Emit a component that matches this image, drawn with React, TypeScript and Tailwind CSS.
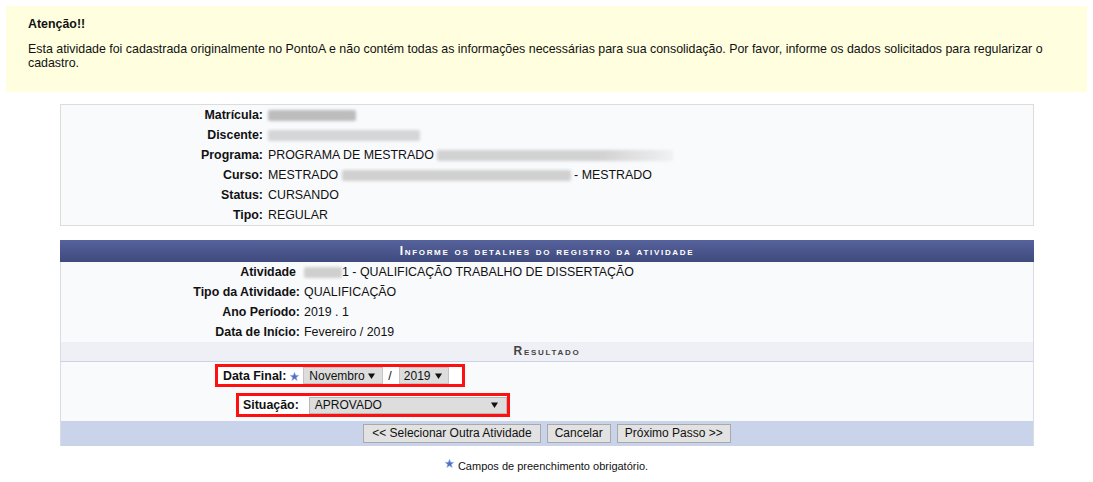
import React from "react";

const Star = ({ size = 9 }: { size?: number }) => (
  <svg width={size} height={size} viewBox="0 0 10 10" className="shrink-0">
    <polygon
      points="5,0.3 6.3,3.6 9.8,3.8 7.1,6.0 8.0,9.5 5,7.5 2.0,9.5 2.9,6.0 0.2,3.8 3.7,3.6"
      fill="#4f70c8"
      stroke="#9fb4e6"
      strokeWidth="0.6"
    />
  </svg>
);

const Arrow = () => (
  <svg width="7" height="6" viewBox="0 0 7 6" className="shrink-0">
    <polygon points="0,0.5 7,0.5 3.5,6" fill="#111" />
  </svg>
);

const Blur = ({ w, tone = "#cbcbcb", fade = false }: { w: number; tone?: string; fade?: boolean }) => (
  <span
    className="inline-block h-[11px] align-middle blur-[1.5px] rounded-[2px]"
    style={{
      width: w,
      background: fade ? `linear-gradient(to right, ${tone}, ${tone} 70%, rgba(220,220,220,0.3))` : tone,
    }}
  />
);

const InfoRow = ({ label, children }: { label: string; children: React.ReactNode }) => (
  <div className="grid grid-cols-[205px_1fr] h-[20px] leading-[20px]">
    <div className="text-right font-bold pr-[3px]">{label}</div>
    <div className="pl-[2px] whitespace-nowrap">{children}</div>
  </div>
);

const FormRow = ({ label, children, extra = "" }: { label: string; children: React.ReactNode; extra?: string }) => (
  <div className="grid grid-cols-[241px_1fr] h-[20px] leading-[20px]">
    <div className={"text-right font-bold pr-[2px] " + extra}>{label}</div>
    <div className="pl-[2px] whitespace-nowrap">{children}</div>
  </div>
);

export default function App() {
  return (
    <div className="w-[1093px] h-[482px] bg-white text-[12.4px] leading-[14px] text-[#111] font-['Liberation_Sans',Arial,sans-serif] overflow-hidden">
      <div className="mx-[6px] mt-[6px] bg-[#ffffe0] pl-[22px] pr-[30px] pt-[11px] pb-[22px]">
        <div className="font-bold">Atenção!!</div>
        <p className="mt-[11px]">
          Esta atividade foi cadastrada originalmente no PontoA e não contém todas as informações necessárias para sua
          consolidação. Por favor, informe os dados solicitados para regularizar o cadastro.
        </p>
      </div>

      <div className="ml-[60px] mt-[12px] w-[974px] border border-[#dcdcdc] bg-[#f9fafc]">
        <InfoRow label="Matrícula:">
          <Blur w={88} tone="#bdbdbd" />
        </InfoRow>
        <InfoRow label="Discente:">
          <Blur w={152} tone="#d6d6d6" />
        </InfoRow>
        <InfoRow label="Programa:">
          PROGRAMA DE MESTRADO <Blur w={236} tone="#d2d2d2" fade />
        </InfoRow>
        <InfoRow label="Curso:">
          MESTRADO <Blur w={229} tone="#d0d0d0" /> - MESTRADO
        </InfoRow>
        <InfoRow label="Status:">CURSANDO</InfoRow>
        <InfoRow label="Tipo:">REGULAR</InfoRow>
      </div>

      <div className="ml-[60px] mt-[14px] w-[974px]">
        <div className="h-[22px] leading-[22px] bg-gradient-to-b from-[#56629b] to-[#3f4a7e] text-white text-center font-bold text-[12px] tracking-[1.7px] [font-variant:small-caps]">
          Informe os detalhes do registro da atividade
        </div>
        <div className="border-x border-[#d9dce4] bg-[#f9fafc]">
          <FormRow label="Atividade" extra="pr-[6px]">
            <Blur w={38} tone="#cfcfcf" />1 - QUALIFICAÇÃO TRABALHO DE DISSERTAÇÃO
          </FormRow>
          <FormRow label="Tipo da Atividade:">QUALIFICAÇÃO</FormRow>
          <FormRow label="Ano Período:">2019 . 1</FormRow>
          <FormRow label="Data de Início:">Fevereiro / 2019</FormRow>
          <div className="h-[20px] leading-[19px] bg-[#eef0f6] border-b border-[#c9d2e6] text-center font-bold text-[12px] tracking-[1.7px] text-[#444] [font-variant:small-caps]">
            Resultado
          </div>
          <div className="pt-[2px] pb-[4px]">
            <div className="ml-[154px] w-[250px] h-[23px] border-[3px] border-[#ff1010] bg-white flex items-center pl-[5px]">
              <span className="font-bold">Data Final:</span>
              <span className="ml-[4px] mt-[1px]">
                <Star size={9} />
              </span>
              <div className="ml-[4px] w-[80px] h-[17px] bg-[#dddddd] border border-[#c4c4c4] flex items-center pl-[5px] pr-[7px] justify-between text-[12px]">
                <span>Novembro</span>
                <Arrow />
              </div>
              <span className="ml-[5px] mr-[7px]">/</span>
              <div className="w-[50px] h-[17px] bg-[#dddddd] border border-[#c4c4c4] flex items-center pl-[4px] pr-[6px] justify-between text-[12px]">
                <span>2019</span>
                <Arrow />
              </div>
            </div>
            <div className="ml-[175px] mt-[6px] w-[274px] h-[24px] border-[3px] border-[#ff1010] bg-white flex items-center pl-[4px]">
              <span className="font-bold">Situação:</span>
              <div className="ml-[10px] w-[198px] h-[17px] bg-[#dddddd] border border-[#b8b8b8] flex items-center pl-[5px] pr-[8px] justify-between text-[12px]">
                <span>APROVADO</span>
                <Arrow />
              </div>
            </div>
          </div>
          <div className="h-[25px] bg-[#c9d3ea] flex items-center justify-center gap-[5px] text-[12px]">
            <button className="h-[19px] px-[8px] bg-[#e2e2e2] border border-[#a9a9a9] leading-[17px]">
              &lt;&lt; Selecionar Outra Atividade
            </button>
            <button className="h-[19px] px-[7px] bg-[#e2e2e2] border border-[#a9a9a9] leading-[17px] ml-[1px]">
              Cancelar
            </button>
            <button className="h-[19px] px-[7px] bg-[#e2e2e2] border border-[#a9a9a9] leading-[17px] ml-[1px]">
              Próximo Passo &gt;&gt;
            </button>
          </div>
        </div>
      </div>

      <div className="mt-[14px] flex justify-center items-start text-[11px] leading-[13px]">
        <span className="mr-[4px] -mt-[1px]">
          <Star size={9} />
        </span>
        <span>Campos de preenchimento obrigatório.</span>
      </div>
    </div>
  );
}
